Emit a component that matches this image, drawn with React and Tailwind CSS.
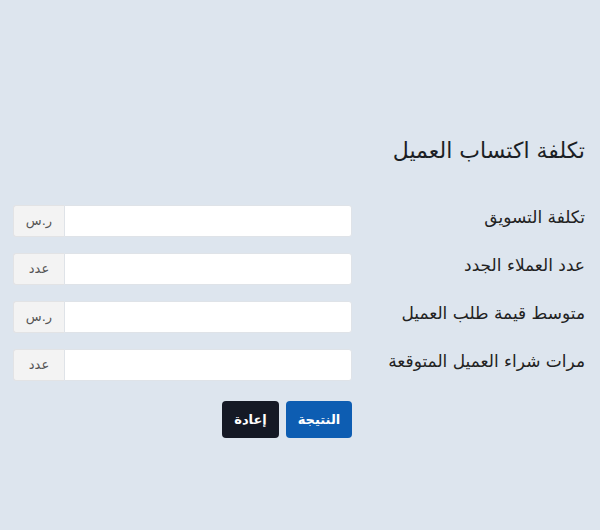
import React from "react";

const rows = [
  { label: "تكلفة التسويق", unit: "ر.س" },
  { label: "عدد العملاء الجدد", unit: "عدد" },
  { label: "متوسط قيمة طلب العميل", unit: "ر.س" },
  { label: "مرات شراء العميل المتوقعة", unit: "عدد" },
];

export default function App() {
  return (
    <div
      dir="rtl"
      className="w-[600px] h-[530px] bg-[#dde5ee] pr-[15px] pl-[13px] pt-[136px]"
      style={{ fontFamily: '"DejaVu Sans", "Noto Sans", sans-serif' }}
    >
      <h1 className="text-[22px] leading-[30px] text-[#1b1e24] font-normal">تكلفة اكتساب العميل</h1>
      <div className="mt-[39px] flex flex-col gap-[16px]">
        {rows.map((r, i) => (
          <div key={i} className="flex items-center">
            <label className="w-[233px] text-[17px] text-[#222] -mt-[6px]">{r.label}</label>
            <div className="flex flex-1 h-[32px]">
              <input className="flex-1 bg-white border border-[#dfe3e8] rounded-r-[3px] outline-none px-2" />
              <span className="w-[51px] flex items-center justify-center bg-[#f3f3f3] border border-[#e2e3e5] border-r-0 rounded-l-[3px] text-[13px] text-[#555]">
                {r.unit}
              </span>
            </div>
          </div>
        ))}
      </div>
      <div className="flex mr-[233px] mt-[20px] gap-[7px]">
        <button className="w-[66px] h-[37px] rounded-[4px] bg-[#0d5db2] text-white text-[13px] font-bold">النتيجة</button>
        <button className="w-[57px] h-[37px] rounded-[4px] bg-[#151925] text-white text-[13px] font-bold">إعادة</button>
      </div>
    </div>
  );
}
